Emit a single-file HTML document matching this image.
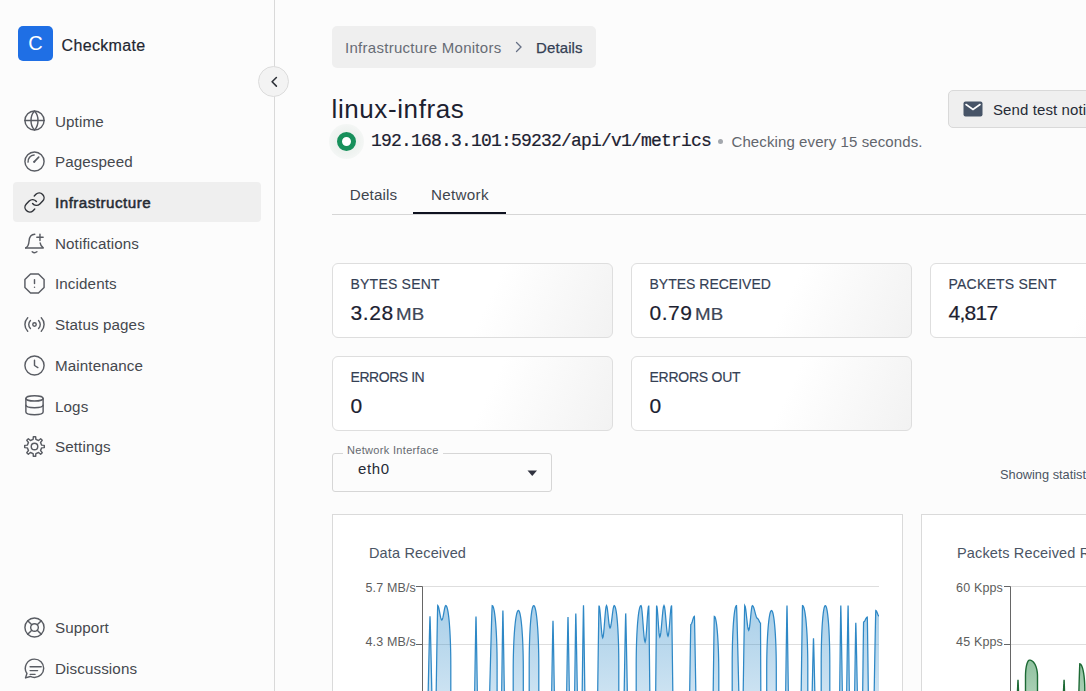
<!DOCTYPE html>
<html><head><meta charset="utf-8">
<style>
*{margin:0;padding:0;box-sizing:border-box}
html,body{width:1086px;height:691px;overflow:hidden;background:#fcfcfc;font-family:"Liberation Sans",sans-serif;color:#344054}
.a{position:absolute;white-space:nowrap;line-height:1}
#sb{position:absolute;left:0;top:0;width:275px;height:691px;border-right:1px solid #d9d9d9;background:#fcfcfc}
.logo{position:absolute;left:18px;top:26px;width:35px;height:35px;border-radius:5px;background:#1f6fe5;color:#fff;font-size:20px;text-align:center;line-height:35px}
.brand{left:61.5px;top:37.8px;font-size:16px;color:#222630;letter-spacing:0.35px;-webkit-text-stroke:0.2px #222630}
.toggle{position:absolute;left:258px;top:66px;width:31px;height:31px;border-radius:50%;background:#f3f3f3;border:1px solid #dcdcdc}
.nav{left:55px;font-size:15.2px;color:#45484e;letter-spacing:0.1px}
.ico{position:absolute;width:23px;height:23px}
.ico svg{display:block;width:23px;height:23px;fill:none;stroke:#595c63;stroke-width:1.5;stroke-linecap:round;stroke-linejoin:round}
.active{position:absolute;left:13px;top:182px;width:248px;height:40px;border-radius:4px;background:#efefef}
.crumb{position:absolute;left:332px;top:26px;width:264px;height:42px;border-radius:5px;background:#efefef}
.card{position:absolute;width:281px;height:75px;border:1px solid #dedede;border-radius:6px;background:linear-gradient(115deg,#ffffff 55%,#f2f2f2 100%)}
.ct{position:absolute;left:17.5px;top:13px;font-size:14px;color:#344054;line-height:1;letter-spacing:0.22px;-webkit-text-stroke:0.15px #344054}
.cv{position:absolute;left:17.5px;top:38px;font-size:21px;letter-spacing:0.6px;color:#1c2130;line-height:1;-webkit-text-stroke:0.2px #1c2130}
.cv small{display:inline-block;font-size:16px;color:#3d4657;margin-left:2.5px;letter-spacing:0.2px;transform:scaleX(1.17);transform-origin:0 0;-webkit-text-stroke:0.2px #3d4657}
.chart{position:absolute;top:514px;height:200px;border:1px solid #dadada;background:#fff}
.yl{font-size:12.5px;color:#5d5d5d;text-align:right;letter-spacing:0.15px}
</style></head><body>
<div id="sb">
  <div class="logo">C</div>
  <div class="a brand">Checkmate</div>
  <div class="active"></div>
  <div class="ico" style="left:23.2px;top:109.2px;"><svg viewBox="0 0 24 24"><circle cx="12" cy="12" r="10"/><path d="M2 12h20"/><path d="M12 2a14 14 0 0 1 3.6 10 14 14 0 0 1-3.6 10 14 14 0 0 1-3.6-10A14 14 0 0 1 12 2z"/></svg></div>
  <div class="a nav" style="top:113.8px;">Uptime</div>
  <div class="ico" style="left:23.2px;top:149.9px;"><svg viewBox="0 0 24 24"><circle cx="12" cy="12" r="10"/><path d="M5.3 12.6A6.8 6.8 0 0 1 11.6 5.2"/><path d="M11.6 12.4L16.4 7.4" stroke-width="1.7"/><circle cx="11.8" cy="12.2" r="1.1" fill="#555a63" stroke="none"/></svg></div>
  <div class="a nav" style="top:154.1px;">Pagespeed</div>
  <div class="ico" style="left:23.2px;top:190.8px;"><svg viewBox="0 0 24 24"><g style="stroke:#2e3137"><path d="M10 13a5 5 0 0 0 7.54.54l3-3a5 5 0 0 0-7.07-7.07l-1.72 1.71"/><path d="M14 11a5 5 0 0 0-7.54-.54l-3 3a5 5 0 0 0 7.07 7.07l1.71-1.71"/></g></svg></div>
  <div class="a nav" style="top:195.1px;color:#262b34;-webkit-text-stroke:0.5px #262b34;letter-spacing:0.48px;">Infrastructure</div>
  <div class="ico" style="left:23.2px;top:231.7px;"><svg viewBox="0 0 24 24"><path d="M2.8 16.6C4.8 15.6 6 13.2 6.3 9.6 6.6 5.2 8.6 2.5 12.3 2.4"/><path d="M17.9 11.4C18.3 14 19.4 15.6 21.2 16.6H2.8"/><path d="M17.7 2.2V8.8M14.4 5.5H21"/><path d="M9.6 20.6C11 21.8 13 21.8 14.5 20.6"/></svg></div>
  <div class="a nav" style="top:235.5px;">Notifications</div>
  <div class="ico" style="left:23.2px;top:272.0px;"><svg viewBox="0 0 24 24"><polygon points="7.86 2 16.14 2 22 7.86 22 16.14 16.14 22 7.86 22 2 16.14 2 7.86 7.86 2"/><path d="M12 8v4"/><path d="M12 16h.01"/></svg></div>
  <div class="a nav" style="top:275.7px;">Incidents</div>
  <div class="ico" style="left:23.2px;top:313.0px;"><svg viewBox="0 0 24 24"><circle cx="12" cy="12" r="1.8"/><path d="M16.24 7.76a6 6 0 0 1 0 8.49m-8.48-.01a6 6 0 0 1 0-8.49m11.31-2.82a10 10 0 0 1 0 14.14m-14.14 0a10 10 0 0 1 0-14.14"/></svg></div>
  <div class="a nav" style="top:317.0px;">Status pages</div>
  <div class="ico" style="left:23.2px;top:353.6px;"><svg viewBox="0 0 24 24"><circle cx="12" cy="12" r="10"/><path d="M12 6.5v5.5l3.5 2.2"/></svg></div>
  <div class="a nav" style="top:357.9px;">Maintenance</div>
  <div class="ico" style="left:23.2px;top:393.8px;"><svg viewBox="0 0 24 24"><ellipse cx="12" cy="4.6" rx="9" ry="2.8"/><path d="M21 11.6c0 1.6-4 2.8-9 2.8s-9-1.2-9-2.8"/><path d="M3 4.6v14.2c0 1.6 4 2.8 9 2.8s9-1.2 9-2.8V4.6"/></svg></div>
  <div class="a nav" style="top:398.5px;">Logs</div>
  <div class="ico" style="left:23.2px;top:435.0px;"><svg viewBox="0 0 24 24"><circle cx="12" cy="12" r="3.4"/><path d="M10.55 4.54 L10.83 1.77 L13.17 1.77 L13.45 4.54 L16.25 5.70 L18.41 3.94 L20.06 5.59 L18.30 7.75 L19.46 10.55 L22.23 10.83 L22.23 13.17 L19.46 13.45 L18.30 16.25 L20.06 18.41 L18.41 20.06 L16.25 18.30 L13.45 19.46 L13.17 22.23 L10.83 22.23 L10.55 19.46 L7.75 18.30 L5.59 20.06 L3.94 18.41 L5.70 16.25 L4.54 13.45 L1.77 13.17 L1.77 10.83 L4.54 10.55 L5.70 7.75 L3.94 5.59 L5.59 3.94 L7.75 5.70Z"/></svg></div>
  <div class="a nav" style="top:438.6px;">Settings</div>
  <div class="ico" style="left:23.2px;top:616.4px;"><svg viewBox="0 0 24 24"><circle cx="12" cy="12" r="10"/><circle cx="12" cy="12" r="4"/><path d="M4.93 4.93l4.24 4.24M14.83 14.83l4.24 4.24M14.83 9.17l4.24-4.24M4.93 19.07l4.24-4.24"/></svg></div>
  <div class="a nav" style="top:619.9px;">Support</div>
  <div class="ico" style="left:23.2px;top:657.1px;"><svg viewBox="0 0 24 24"><path d="M12 2.2a9.6 9.6 0 0 1 0 19.2c-1.6 0-3.1-.4-4.4-1.1L2.6 21.8l1.5-4.6A9.6 9.6 0 0 1 12 2.2z"/><path d="M7.4 10.2H19M7.4 14.2H15.2M7.4 18.1H12.6"/></svg></div>
  <div class="a nav" style="top:660.9px;">Discussions</div>
</div>
<div class="toggle"><svg width="31" height="31" viewBox="0 0 31 31" style="position:absolute;left:-1px;top:-1px"><path d="M18.4 11.5 L14.1 15.8 L18.4 20.1" fill="none" stroke="#2f333a" stroke-width="1.6" stroke-linecap="round" stroke-linejoin="round"/></svg></div>

<div class="crumb"></div>
<div class="a" style="left:345px;top:39.5px;font-size:15px;letter-spacing:0.28px;color:#676c75">Infrastructure Monitors</div>
<svg class="a" style="left:513px;top:41px" width="12" height="12" viewBox="0 0 12 12"><path d="M3.5 1.5 L8 6 L3.5 10.5" fill="none" stroke="#667085" stroke-width="1.3" stroke-linecap="round"/></svg>
<div class="a" style="left:536px;top:39.5px;font-size:15px;letter-spacing:0.12px;color:#344054;-webkit-text-stroke:0.25px #344054">Details</div>

<div class="a" style="left:331.5px;top:96px;font-size:26px;letter-spacing:0.6px;color:#1c2130">linux-infras</div>
<div class="a" style="left:329px;top:124px;width:35px;height:35px;border-radius:50%;background:radial-gradient(circle,rgba(225,235,228,0.9) 0%,rgba(235,240,237,0.7) 55%,rgba(252,252,252,0) 100%)"></div>
<div class="a" style="left:337px;top:132px;width:19px;height:19px;border-radius:50%;border:5.3px solid #17905b;background:#fff"></div>
<div class="a" style="left:371px;top:132px;font-family:'Liberation Mono',monospace;font-size:18px;letter-spacing:-0.8px;color:#1c2130;-webkit-text-stroke:0.2px #1c2130">192.168.3.101:59232/api/v1/metrics</div>
<div class="a" style="left:717.5px;top:139px;width:5px;height:5px;border-radius:50%;background:#a3a7ad"></div>
<div class="a" style="left:731.5px;top:134px;font-size:15px;letter-spacing:0.1px;color:#62666d">Checking every 15 seconds.</div>

<div class="a" style="left:948px;top:90px;width:160px;height:38px;border:1px solid #d9d9d9;border-radius:5px;background:#efefef"></div>
<svg class="a" style="left:963px;top:101px" width="20" height="16" viewBox="0 0 20 16"><rect x="0.5" y="0.5" width="19" height="15" rx="2" fill="#475467"/><path d="M3 3.5 L10 8.5 L17 3.5" fill="none" stroke="#fff" stroke-width="1.6" stroke-linecap="round"/></svg>
<div class="a" style="left:993px;top:101.5px;font-size:15px;letter-spacing:0.1px;color:#262b36">Send test notification</div>

<div class="a" style="left:349.8px;top:186.8px;font-size:15.2px;letter-spacing:0.15px;color:#40454e">Details</div>
<div class="a" style="left:431px;top:186.8px;font-size:15.2px;letter-spacing:0.3px;color:#40454e">Network</div>
<div class="a" style="left:332px;top:214px;width:760px;height:1px;background:#d6d6d6"></div>
<div class="a" style="left:413px;top:212px;width:93px;height:2px;background:#0f1220"></div>

<div class="card" style="left:332px;top:263px"><div class="ct">BYTES SENT</div><div class="cv">3.28<small>MB</small></div></div>
<div class="card" style="left:631px;top:263px"><div class="ct" style="letter-spacing:0px">BYTES RECEIVED</div><div class="cv" style="letter-spacing:0.5px">0.79<small>MB</small></div></div>
<div class="card" style="left:930px;top:263px"><div class="ct">PACKETS SENT</div><div class="cv" style="letter-spacing:-0.7px">4,817</div></div>
<div class="card" style="left:332px;top:356px"><div class="ct" style="letter-spacing:-0.45px">ERRORS IN</div><div class="cv">0</div></div>
<div class="card" style="left:631px;top:356px"><div class="ct" style="letter-spacing:-0.25px">ERRORS OUT</div><div class="cv">0</div></div>

<div class="a" style="left:332px;top:453px;width:220px;height:39px;border:1px solid #d6d6d6;border-radius:3px"></div>
<div class="a" style="left:343px;top:444px;height:14px;padding:0 4px;background:#fcfcfc;font-size:11px;letter-spacing:0.32px;color:#666a70;line-height:13px">Network Interface</div>
<div class="a" style="left:358px;top:461px;font-size:15px;letter-spacing:0.6px;color:#262b36">eth0</div>
<svg class="a" style="left:527px;top:469.5px" width="11" height="7" viewBox="0 0 11 7"><path d="M0.5 0.5 L10 0.5 L5.25 6 Z" fill="#30323f"/></svg>
<div class="a" style="left:1000px;top:469px;font-size:12.8px;color:#4b5563">Showing statistics for last 1 hour</div>

<div class="chart" style="left:332px;width:571px"></div>
<div class="chart" style="left:921px;width:300px"></div>
<div class="a" style="left:369px;top:546px;font-size:14.5px;letter-spacing:0.15px;color:#4b5565">Data Received</div>
<div class="a" style="left:957px;top:546px;font-size:14.5px;letter-spacing:0.15px;color:#4b5565">Packets Received Rate</div>
<div class="a yl" style="left:340px;width:76px;top:582px">5.7 MB/s</div>
<div class="a yl" style="left:340px;width:76px;top:636px">4.3 MB/s</div>
<div class="a yl" style="left:930px;width:73px;top:582px">60 Kpps</div>
<div class="a yl" style="left:930px;width:73px;top:636px">45 Kpps</div>
<svg class="a" style="left:0;top:0" width="1086" height="691" viewBox="0 0 1086 691">
<defs>
<linearGradient id="gb" x1="0" y1="600" x2="0" y2="760" gradientUnits="userSpaceOnUse"><stop offset="0" stop-color="#2f8bc9" stop-opacity="0.42"/><stop offset="1" stop-color="#2f8bc9" stop-opacity="0.12"/></linearGradient>
<linearGradient id="gg" x1="0" y1="655" x2="0" y2="760" gradientUnits="userSpaceOnUse"><stop offset="0" stop-color="#2e8b4a" stop-opacity="0.55"/><stop offset="1" stop-color="#2e8b4a" stop-opacity="0.15"/></linearGradient>
<clipPath id="cb"><rect x="422" y="580" width="457" height="120"/></clipPath>
<clipPath id="cg"><rect x="1010" y="580" width="200" height="120"/></clipPath>
</defs>
<path d="M422 586.5 H879 M422 644.5 H879" stroke="#dedede" stroke-width="1"/>
<path d="M416 586.5 H422.5 V700 M416 644.5 H422.5" fill="none" stroke="#666" stroke-width="1"/>
<path d="M1010 586.5 H1086 M1010 644.5 H1086" stroke="#dedede" stroke-width="1"/>
<path d="M1004 586.5 H1010.5 V700 M1004 644.5 H1010.5" fill="none" stroke="#666" stroke-width="1"/>
<g clip-path="url(#cb)"><path d="M428.20 702.00 L428.20 691.00 L428.27 687.89 L428.33 684.78 L428.40 681.67 L428.46 678.57 L428.53 675.46 L428.60 672.35 L428.67 669.24 L428.73 666.13 L428.80 663.02 L428.87 659.92 L428.94 656.81 L429.01 653.70 L429.08 650.59 L429.15 647.48 L429.22 644.38 L429.29 641.27 L429.36 638.16 L429.44 635.05 L429.51 631.94 L429.59 628.83 L429.67 625.73 L429.76 622.62 L429.85 619.51 L430.00 616.40 L430.15 619.51 L430.24 622.62 L430.33 625.73 L430.41 628.83 L430.49 631.94 L430.56 635.05 L430.64 638.16 L430.71 641.27 L430.78 644.38 L430.85 647.48 L430.92 650.59 L430.99 653.70 L431.06 656.81 L431.13 659.92 L431.20 663.02 L431.27 666.13 L431.33 669.24 L431.40 672.35 L431.47 675.46 L431.54 678.57 L431.60 681.67 L431.67 684.78 L431.73 687.89 L431.80 691.00 L431.80 702.00Z M436.20 702.00 L436.20 691.00 L436.25 687.44 L436.31 683.88 L436.36 680.33 L436.42 676.77 L436.48 673.21 L436.53 669.65 L436.59 666.09 L436.64 662.53 L436.70 658.98 L436.76 655.42 L436.81 651.86 L436.87 648.30 L436.93 644.74 L436.99 641.18 L437.05 637.62 L437.11 634.07 L437.17 630.51 L437.23 626.95 L437.29 623.39 L437.36 619.83 L437.43 616.27 L437.50 612.72 L437.58 609.16 L437.70 605.60 L438.21 606.15 L438.73 607.71 L439.24 610.04 L439.75 612.80 L440.26 615.56 L440.77 617.89 L441.29 619.45 L441.80 620.00 L442.30 619.45 L442.80 617.89 L443.30 615.56 L443.80 612.80 L444.30 610.04 L444.80 607.71 L445.30 606.15 L445.80 605.60 L446.15 605.75 L446.50 606.19 L446.85 606.93 L447.19 607.97 L447.53 609.31 L447.86 610.94 L448.18 612.86 L448.50 615.09 L448.80 617.61 L449.09 620.43 L449.37 623.54 L449.62 626.95 L449.86 630.66 L450.08 634.66 L450.28 638.96 L450.45 643.56 L450.59 648.45 L450.70 653.64 L450.77 659.12 L450.80 664.91 L450.80 670.98 L450.80 677.36 L450.80 684.03 L450.80 691.00 L450.80 702.00Z M474.70 702.00 L474.70 691.00 L474.75 687.89 L474.80 684.78 L474.84 681.67 L474.89 678.57 L474.94 675.46 L474.99 672.35 L475.04 669.24 L475.08 666.13 L475.13 663.02 L475.18 659.92 L475.23 656.81 L475.28 653.70 L475.33 650.59 L475.38 647.48 L475.44 644.38 L475.49 641.27 L475.54 638.16 L475.59 635.05 L475.65 631.94 L475.70 628.83 L475.76 625.73 L475.82 622.62 L475.89 619.51 L476.00 616.40 L476.11 619.51 L476.18 622.62 L476.24 625.73 L476.30 628.83 L476.35 631.94 L476.41 635.05 L476.46 638.16 L476.51 641.27 L476.56 644.38 L476.62 647.48 L476.67 650.59 L476.72 653.70 L476.77 656.81 L476.82 659.92 L476.87 663.02 L476.92 666.13 L476.96 669.24 L477.01 672.35 L477.06 675.46 L477.11 678.57 L477.16 681.67 L477.20 684.78 L477.25 687.89 L477.30 691.00 L477.30 702.00Z M489.70 702.00 L489.70 691.00 L489.79 687.44 L489.88 683.88 L489.97 680.33 L490.07 676.77 L490.16 673.21 L490.25 669.65 L490.35 666.09 L490.44 662.53 L490.53 658.98 L490.63 655.42 L490.72 651.86 L490.82 648.30 L490.92 644.74 L491.02 641.18 L491.11 637.62 L491.21 634.07 L491.32 630.51 L491.42 626.95 L491.52 623.39 L491.63 619.83 L491.74 616.27 L491.86 612.72 L491.99 609.16 L492.20 605.60 L492.55 605.75 L492.89 606.19 L493.23 606.93 L493.57 607.97 L493.90 609.31 L494.23 610.94 L494.54 612.86 L494.85 615.09 L495.15 617.61 L495.43 620.43 L495.70 623.54 L495.96 626.95 L496.19 630.66 L496.41 634.66 L496.60 638.96 L496.76 643.56 L496.90 648.45 L497.01 653.64 L497.07 659.12 L497.10 664.91 L497.10 670.98 L497.10 677.36 L497.10 684.03 L497.10 691.00 L497.10 702.00Z M501.70 702.00 L501.70 691.00 L501.74 687.65 L501.79 684.29 L501.83 680.94 L501.88 677.58 L501.92 674.23 L501.97 670.88 L502.01 667.52 L502.06 664.17 L502.10 660.81 L502.15 657.46 L502.19 654.10 L502.24 650.75 L502.28 647.40 L502.33 644.04 L502.38 640.69 L502.43 637.33 L502.48 633.98 L502.52 630.62 L502.58 627.27 L502.63 623.92 L502.68 620.56 L502.74 617.21 L502.80 613.85 L502.90 610.50 L503.02 613.85 L503.09 617.21 L503.15 620.56 L503.22 623.92 L503.28 627.27 L503.34 630.62 L503.40 633.98 L503.45 637.33 L503.51 640.69 L503.56 644.04 L503.62 647.40 L503.67 650.75 L503.73 654.10 L503.78 657.46 L503.83 660.81 L503.89 664.17 L503.94 667.52 L503.99 670.88 L504.04 674.23 L504.09 677.58 L504.15 680.94 L504.20 684.29 L504.25 687.65 L504.30 691.00 L504.30 702.00Z M513.20 702.00 L513.20 691.00 L513.20 684.43 L513.20 678.14 L513.20 672.13 L513.22 666.40 L513.27 660.95 L513.37 655.78 L513.50 650.89 L513.66 646.28 L513.84 641.95 L514.05 637.89 L514.28 634.12 L514.53 630.62 L514.80 627.41 L515.08 624.48 L515.37 621.82 L515.68 619.44 L516.00 617.35 L516.33 615.53 L516.66 613.99 L517.00 612.74 L517.35 611.76 L517.70 611.06 L518.05 610.64 L518.40 610.50 L518.74 610.64 L519.07 611.06 L519.40 611.76 L519.73 612.74 L520.05 613.99 L520.37 615.53 L520.68 617.35 L520.98 619.44 L521.27 621.82 L521.55 624.48 L521.82 627.41 L522.07 630.62 L522.30 634.12 L522.52 637.89 L522.72 641.95 L522.89 646.28 L523.04 650.89 L523.15 655.78 L523.24 660.95 L523.29 666.40 L523.30 672.13 L523.30 678.14 L523.30 684.43 L523.30 691.00 L523.30 702.00Z M529.20 702.00 L529.20 691.00 L529.20 684.03 L529.20 677.36 L529.20 670.98 L529.20 664.91 L529.22 659.12 L529.27 653.64 L529.36 648.45 L529.49 643.56 L529.64 638.96 L529.81 634.66 L530.01 630.66 L530.22 626.95 L530.46 623.54 L530.71 620.43 L530.97 617.61 L531.24 615.09 L531.53 612.86 L531.82 610.94 L532.12 609.31 L532.43 607.97 L532.74 606.93 L533.06 606.19 L533.38 605.75 L533.70 605.60 L534.06 605.75 L534.41 606.19 L534.77 606.93 L535.12 607.97 L535.46 609.31 L535.80 610.94 L536.13 612.86 L536.45 615.09 L536.75 617.61 L537.05 620.43 L537.33 623.54 L537.59 626.95 L537.84 630.66 L538.06 634.66 L538.26 638.96 L538.44 643.56 L538.58 648.45 L538.69 653.64 L538.77 659.12 L538.80 664.91 L538.80 670.98 L538.80 677.36 L538.80 684.03 L538.80 691.00 L538.80 702.00Z M551.70 702.00 L551.70 691.00 L551.75 688.08 L551.80 685.15 L551.84 682.23 L551.89 679.30 L551.94 676.38 L551.99 673.45 L552.04 670.52 L552.08 667.60 L552.13 664.67 L552.18 661.75 L552.23 658.82 L552.28 655.90 L552.33 652.98 L552.38 650.05 L552.44 647.12 L552.49 644.20 L552.54 641.27 L552.59 638.35 L552.65 635.42 L552.70 632.50 L552.76 629.57 L552.82 626.65 L552.89 623.72 L553.00 620.80 L553.11 623.72 L553.18 626.65 L553.24 629.57 L553.30 632.50 L553.35 635.42 L553.41 638.35 L553.46 641.27 L553.51 644.20 L553.56 647.12 L553.62 650.05 L553.67 652.98 L553.72 655.90 L553.77 658.82 L553.82 661.75 L553.87 664.67 L553.92 667.60 L553.96 670.52 L554.01 673.45 L554.06 676.38 L554.11 679.30 L554.16 682.23 L554.20 685.15 L554.25 688.08 L554.30 691.00 L554.30 702.00Z M566.70 702.00 L566.70 691.00 L566.75 687.92 L566.80 684.84 L566.84 681.76 L566.89 678.68 L566.94 675.60 L566.99 672.52 L567.04 669.45 L567.08 666.37 L567.13 663.29 L567.18 660.21 L567.23 657.13 L567.28 654.05 L567.33 650.97 L567.38 647.89 L567.44 644.81 L567.49 641.73 L567.54 638.65 L567.59 635.58 L567.65 632.50 L567.70 629.42 L567.76 626.34 L567.82 623.26 L567.89 620.18 L568.00 617.10 L568.11 620.18 L568.18 623.26 L568.24 626.34 L568.30 629.42 L568.35 632.50 L568.41 635.58 L568.46 638.65 L568.51 641.73 L568.56 644.81 L568.62 647.89 L568.67 650.97 L568.72 654.05 L568.77 657.13 L568.82 660.21 L568.87 663.29 L568.92 666.37 L568.96 669.45 L569.01 672.52 L569.06 675.60 L569.11 678.68 L569.16 681.76 L569.20 684.84 L569.25 687.92 L569.30 691.00 L569.30 702.00Z M574.70 702.00 L574.70 691.00 L574.74 687.77 L574.78 684.53 L574.82 681.30 L574.86 678.07 L574.90 674.83 L574.94 671.60 L574.98 668.37 L575.03 665.13 L575.07 661.90 L575.11 658.67 L575.15 655.43 L575.19 652.20 L575.24 648.97 L575.28 645.73 L575.32 642.50 L575.37 639.27 L575.41 636.03 L575.46 632.80 L575.50 629.57 L575.55 626.33 L575.60 623.10 L575.65 619.87 L575.71 616.63 L575.80 613.40 L575.92 616.63 L576.00 619.87 L576.07 623.10 L576.14 626.33 L576.21 629.57 L576.27 632.80 L576.33 636.03 L576.39 639.27 L576.45 642.50 L576.51 645.73 L576.57 648.97 L576.63 652.20 L576.69 655.43 L576.74 658.67 L576.80 661.90 L576.86 665.13 L576.91 668.37 L576.97 671.60 L577.02 674.83 L577.08 678.07 L577.14 681.30 L577.19 684.53 L577.25 687.77 L577.30 691.00 L577.30 702.00Z M582.20 702.00 L582.20 691.00 L582.25 687.43 L582.30 683.86 L582.34 680.29 L582.39 676.72 L582.44 673.15 L582.49 669.58 L582.54 666.00 L582.58 662.43 L582.63 658.86 L582.68 655.29 L582.73 651.72 L582.78 648.15 L582.83 644.58 L582.88 641.01 L582.94 637.44 L582.99 633.87 L583.04 630.30 L583.09 626.72 L583.15 623.15 L583.20 619.58 L583.26 616.01 L583.32 612.44 L583.39 608.87 L583.50 605.30 L583.61 608.87 L583.68 612.44 L583.74 616.01 L583.80 619.58 L583.85 623.15 L583.91 626.72 L583.96 630.30 L584.01 633.87 L584.06 637.44 L584.12 641.01 L584.17 644.58 L584.22 648.15 L584.27 651.72 L584.32 655.29 L584.37 658.86 L584.42 662.43 L584.46 666.00 L584.51 669.58 L584.56 673.15 L584.61 676.72 L584.66 680.29 L584.70 683.86 L584.75 687.43 L584.80 691.00 L584.80 702.00Z M597.70 702.00 L597.70 691.00 L597.75 687.44 L597.80 683.88 L597.84 680.33 L597.89 676.77 L597.94 673.21 L597.99 669.65 L598.04 666.09 L598.08 662.53 L598.13 658.98 L598.18 655.42 L598.23 651.86 L598.28 648.30 L598.33 644.74 L598.38 641.18 L598.44 637.62 L598.49 634.07 L598.54 630.51 L598.59 626.95 L598.65 623.39 L598.70 619.83 L598.76 616.27 L598.82 612.72 L598.89 609.16 L599.00 605.60 L599.46 606.82 L599.92 610.30 L600.39 615.51 L600.85 621.65 L601.31 627.79 L601.78 633.00 L602.24 636.48 L602.70 637.70 L603.18 636.48 L603.65 633.00 L604.12 627.79 L604.60 621.65 L605.08 615.51 L605.55 610.30 L606.02 606.82 L606.50 605.60 L606.94 606.45 L607.38 608.88 L607.81 612.51 L608.25 616.80 L608.69 621.09 L609.12 624.72 L609.56 627.15 L610.00 628.00 L610.52 627.15 L611.05 624.72 L611.58 621.09 L612.10 616.80 L612.62 612.51 L613.15 608.88 L613.68 606.45 L614.20 605.60 L614.53 605.75 L614.85 606.19 L615.17 606.93 L615.49 607.97 L615.81 609.31 L616.11 610.94 L616.41 612.86 L616.71 615.09 L616.99 617.61 L617.25 620.43 L617.51 623.54 L617.75 626.95 L617.97 630.66 L618.17 634.66 L618.35 638.96 L618.50 643.56 L618.63 648.45 L618.72 653.64 L618.78 659.12 L618.80 664.91 L618.80 670.98 L618.80 677.36 L618.80 684.03 L618.80 691.00 L618.80 702.00Z M624.20 702.00 L624.20 691.00 L624.25 687.77 L624.31 684.53 L624.36 681.30 L624.42 678.07 L624.48 674.83 L624.53 671.60 L624.59 668.37 L624.64 665.13 L624.70 661.90 L624.76 658.67 L624.81 655.43 L624.87 652.20 L624.93 648.97 L624.99 645.73 L625.05 642.50 L625.11 639.27 L625.17 636.03 L625.23 632.80 L625.29 629.57 L625.36 626.33 L625.43 623.10 L625.50 619.87 L625.58 616.63 L625.70 613.40 L625.83 616.63 L625.92 619.87 L625.99 623.10 L626.06 626.33 L626.13 629.57 L626.20 632.80 L626.27 636.03 L626.33 639.27 L626.39 642.50 L626.46 645.73 L626.52 648.97 L626.58 652.20 L626.64 655.43 L626.71 658.67 L626.77 661.90 L626.83 665.13 L626.89 668.37 L626.95 671.60 L627.01 674.83 L627.07 678.07 L627.12 681.30 L627.18 684.53 L627.24 687.77 L627.30 691.00 L627.30 702.00Z M636.20 702.00 L636.20 691.00 L636.20 684.03 L636.20 677.36 L636.20 670.98 L636.20 664.91 L636.22 659.12 L636.29 653.64 L636.39 648.45 L636.52 643.56 L636.69 638.96 L636.87 634.66 L637.08 630.66 L637.31 626.95 L637.56 623.54 L637.83 620.43 L638.11 617.61 L638.40 615.09 L638.70 612.86 L639.01 610.94 L639.33 609.31 L639.66 607.97 L639.99 606.93 L640.32 606.19 L640.66 605.75 L641.00 605.60 L641.51 606.99 L642.02 610.95 L642.54 616.87 L643.05 623.85 L643.56 630.83 L644.08 636.75 L644.59 640.71 L645.10 642.10 L645.56 640.71 L646.02 636.75 L646.49 630.83 L646.95 623.85 L647.41 616.87 L647.88 610.95 L648.34 606.99 L648.80 605.60 L648.88 609.16 L648.93 612.72 L648.98 616.27 L649.03 619.83 L649.07 623.39 L649.11 626.95 L649.15 630.51 L649.19 634.07 L649.23 637.62 L649.27 641.18 L649.31 644.74 L649.35 648.30 L649.39 651.86 L649.43 655.42 L649.47 658.98 L649.50 662.53 L649.54 666.09 L649.58 669.65 L649.62 673.21 L649.65 676.77 L649.69 680.33 L649.73 683.88 L649.76 687.44 L649.80 691.00 L649.80 702.00Z M655.70 702.00 L655.70 691.00 L655.73 687.44 L655.77 683.88 L655.80 680.33 L655.83 676.77 L655.87 673.21 L655.90 669.65 L655.93 666.09 L655.97 662.53 L656.00 658.98 L656.03 655.42 L656.07 651.86 L656.10 648.30 L656.14 644.74 L656.17 641.18 L656.21 637.62 L656.25 634.07 L656.28 630.51 L656.32 626.95 L656.36 623.39 L656.40 619.83 L656.44 616.27 L656.48 612.72 L656.53 609.16 L656.60 605.60 L657.00 606.80 L657.40 610.20 L657.80 615.29 L658.20 621.30 L658.60 627.31 L659.00 632.40 L659.40 635.80 L659.80 637.00 L660.32 635.80 L660.85 632.40 L661.38 627.31 L661.90 621.30 L662.42 615.29 L662.95 610.20 L663.48 606.80 L664.00 605.60 L664.50 606.76 L665.00 610.08 L665.50 615.04 L666.00 620.90 L666.50 626.76 L667.00 631.72 L667.50 635.04 L668.00 636.20 L668.45 635.04 L668.90 631.72 L669.35 626.76 L669.80 620.90 L670.25 615.04 L670.70 610.08 L671.15 606.76 L671.60 605.60 L671.70 609.16 L671.76 612.72 L671.82 616.27 L671.87 619.83 L671.92 623.39 L671.98 626.95 L672.02 630.51 L672.07 634.07 L672.12 637.62 L672.17 641.18 L672.22 644.74 L672.26 648.30 L672.31 651.86 L672.35 655.42 L672.40 658.98 L672.44 662.53 L672.49 666.09 L672.53 669.65 L672.58 673.21 L672.62 676.77 L672.67 680.33 L672.71 683.88 L672.76 687.44 L672.80 691.00 L672.80 702.00Z M689.70 702.00 L689.70 691.00 L689.74 688.23 L689.78 685.46 L689.82 682.69 L689.86 679.92 L689.90 677.15 L689.94 674.38 L689.98 671.60 L690.03 668.83 L690.07 666.06 L690.11 663.29 L690.15 660.52 L690.19 657.75 L690.24 654.98 L690.28 652.21 L690.32 649.44 L690.37 646.67 L690.41 643.90 L690.46 641.12 L690.50 638.35 L690.55 635.58 L690.60 632.81 L690.65 630.04 L690.71 627.27 L690.80 624.50 L691.25 624.19 L691.70 623.31 L692.15 622.00 L692.60 620.45 L693.05 618.90 L693.50 617.59 L693.95 616.71 L694.40 616.40 L694.52 619.51 L694.59 622.62 L694.65 625.73 L694.72 628.83 L694.78 631.94 L694.84 635.05 L694.90 638.16 L694.95 641.27 L695.01 644.38 L695.06 647.48 L695.12 650.59 L695.17 653.70 L695.23 656.81 L695.28 659.92 L695.33 663.02 L695.39 666.13 L695.44 669.24 L695.49 672.35 L695.54 675.46 L695.59 678.57 L695.65 681.67 L695.70 684.78 L695.75 687.89 L695.80 691.00 L695.80 702.00Z M713.20 702.00 L713.20 691.00 L713.24 687.89 L713.28 684.78 L713.32 681.67 L713.36 678.57 L713.40 675.46 L713.44 672.35 L713.48 669.24 L713.53 666.13 L713.57 663.02 L713.61 659.92 L713.65 656.81 L713.69 653.70 L713.74 650.59 L713.78 647.48 L713.82 644.38 L713.87 641.27 L713.91 638.16 L713.96 635.05 L714.00 631.94 L714.05 628.83 L714.10 625.73 L714.15 622.62 L714.21 619.51 L714.30 616.40 L714.60 616.53 L714.90 616.92 L715.19 617.57 L715.49 618.47 L715.78 619.64 L716.06 621.06 L716.34 622.75 L716.61 624.69 L716.87 626.89 L717.12 629.35 L717.37 632.07 L717.59 635.05 L717.81 638.29 L718.01 641.78 L718.19 645.54 L718.36 649.56 L718.50 653.83 L718.62 658.36 L718.71 663.15 L718.77 668.21 L718.80 673.52 L718.80 679.08 L718.80 684.91 L718.80 691.00 L718.80 702.00Z M732.20 702.00 L732.20 691.00 L732.20 684.03 L732.20 677.36 L732.20 670.98 L732.20 664.91 L732.21 659.12 L732.26 653.64 L732.35 648.45 L732.46 643.56 L732.61 638.96 L732.77 634.66 L732.96 630.66 L733.17 626.95 L733.39 623.54 L733.63 620.43 L733.88 617.61 L734.14 615.09 L734.41 612.86 L734.70 610.94 L734.99 609.31 L735.28 607.97 L735.58 606.93 L735.89 606.19 L736.19 605.75 L736.50 605.60 L736.69 609.16 L736.81 612.72 L736.92 616.27 L737.02 619.83 L737.12 623.39 L737.22 626.95 L737.31 630.51 L737.41 634.07 L737.50 637.62 L737.59 641.18 L737.68 644.74 L737.77 648.30 L737.86 651.86 L737.95 655.42 L738.03 658.98 L738.12 662.53 L738.21 666.09 L738.29 669.65 L738.38 673.21 L738.46 676.77 L738.55 680.33 L738.63 683.88 L738.72 687.44 L738.80 691.00 L738.80 702.00Z M743.20 702.00 L743.20 691.00 L743.25 687.44 L743.31 683.88 L743.36 680.33 L743.42 676.77 L743.48 673.21 L743.53 669.65 L743.59 666.09 L743.64 662.53 L743.70 658.98 L743.76 655.42 L743.81 651.86 L743.87 648.30 L743.93 644.74 L743.99 641.18 L744.05 637.62 L744.11 634.07 L744.17 630.51 L744.23 626.95 L744.29 623.39 L744.36 619.83 L744.43 616.27 L744.50 612.72 L744.58 609.16 L744.70 605.60 L745.20 606.54 L745.70 609.22 L746.20 613.22 L746.70 617.95 L747.20 622.68 L747.70 626.68 L748.20 629.36 L748.70 630.30 L749.16 629.36 L749.62 626.68 L750.09 622.68 L750.55 617.95 L751.01 613.22 L751.48 609.22 L751.94 606.54 L752.40 605.60 L753.05 606.09 L753.70 607.50 L754.35 609.61 L755.00 612.10 L755.65 614.59 L756.30 616.70 L756.95 618.11 L757.60 618.60 L757.96 618.77 L758.33 619.24 L758.69 619.96 L759.05 620.80 L759.41 621.64 L759.77 622.36 L760.14 622.83 L760.50 623.00 L760.52 625.83 L760.54 628.67 L760.55 631.50 L760.57 634.33 L760.58 637.17 L760.59 640.00 L760.61 642.83 L760.62 645.67 L760.63 648.50 L760.64 651.33 L760.65 654.17 L760.67 657.00 L760.68 659.83 L760.69 662.67 L760.70 665.50 L760.71 668.33 L760.72 671.17 L760.73 674.00 L760.74 676.83 L760.76 679.67 L760.77 682.50 L760.78 685.33 L760.79 688.17 L760.80 691.00 L760.80 702.00Z M766.70 702.00 L766.70 691.00 L766.70 684.43 L766.70 678.14 L766.70 672.13 L766.71 666.40 L766.75 660.95 L766.84 655.78 L766.95 650.89 L767.10 646.28 L767.26 641.95 L767.46 637.89 L767.67 634.12 L767.90 630.62 L768.15 627.41 L768.41 624.48 L768.68 621.82 L768.97 619.44 L769.26 617.35 L769.57 615.53 L769.88 613.99 L770.20 612.74 L770.52 611.76 L770.84 611.06 L771.17 610.64 L771.50 610.50 L771.83 610.64 L772.16 611.06 L772.48 611.76 L772.80 612.74 L773.12 613.99 L773.43 615.53 L773.74 617.35 L774.03 619.44 L774.32 621.82 L774.59 624.48 L774.85 627.41 L775.10 630.62 L775.33 634.12 L775.54 637.89 L775.74 641.95 L775.90 646.28 L776.05 650.89 L776.16 655.78 L776.25 660.95 L776.29 666.40 L776.30 672.13 L776.30 678.14 L776.30 684.43 L776.30 691.00 L776.30 702.00Z M785.70 702.00 L785.70 691.00 L785.75 687.44 L785.80 683.88 L785.84 680.33 L785.89 676.77 L785.94 673.21 L785.99 669.65 L786.04 666.09 L786.08 662.53 L786.13 658.98 L786.18 655.42 L786.23 651.86 L786.28 648.30 L786.33 644.74 L786.38 641.18 L786.44 637.62 L786.49 634.07 L786.54 630.51 L786.59 626.95 L786.65 623.39 L786.70 619.83 L786.76 616.27 L786.82 612.72 L786.89 609.16 L787.00 605.60 L787.11 609.16 L787.18 612.72 L787.24 616.27 L787.30 619.83 L787.35 623.39 L787.41 626.95 L787.46 630.51 L787.51 634.07 L787.56 637.62 L787.62 641.18 L787.67 644.74 L787.72 648.30 L787.77 651.86 L787.82 655.42 L787.87 658.98 L787.92 662.53 L787.96 666.09 L788.01 669.65 L788.06 673.21 L788.11 676.77 L788.16 680.33 L788.20 683.88 L788.25 687.44 L788.30 691.00 L788.30 702.00Z M801.20 702.00 L801.20 691.00 L801.25 687.44 L801.30 683.88 L801.34 680.33 L801.39 676.77 L801.44 673.21 L801.49 669.65 L801.54 666.09 L801.58 662.53 L801.63 658.98 L801.68 655.42 L801.73 651.86 L801.78 648.30 L801.83 644.74 L801.88 641.18 L801.94 637.62 L801.99 634.07 L802.04 630.51 L802.09 626.95 L802.15 623.39 L802.20 619.83 L802.26 616.27 L802.32 612.72 L802.39 609.16 L802.50 605.60 L802.87 605.75 L803.24 606.19 L803.60 606.93 L803.96 607.97 L804.32 609.31 L804.67 610.94 L805.01 612.86 L805.34 615.09 L805.66 617.61 L805.97 620.43 L806.26 623.54 L806.53 626.95 L806.78 630.66 L807.02 634.66 L807.23 638.96 L807.41 643.56 L807.56 648.45 L807.68 653.64 L807.76 659.12 L807.80 664.91 L807.80 670.98 L807.80 677.36 L807.80 684.03 L807.80 691.00 L807.80 702.00Z M812.20 702.00 L812.20 691.00 L812.25 688.81 L812.30 686.62 L812.34 684.42 L812.39 682.23 L812.44 680.04 L812.49 677.85 L812.54 675.66 L812.58 673.47 L812.63 671.27 L812.68 669.08 L812.73 666.89 L812.78 664.70 L812.83 662.51 L812.88 660.32 L812.94 658.12 L812.99 655.93 L813.04 653.74 L813.09 651.55 L813.15 649.36 L813.20 647.17 L813.26 644.98 L813.32 642.78 L813.39 640.59 L813.50 638.40 L813.61 640.59 L813.68 642.78 L813.74 644.98 L813.80 647.17 L813.85 649.36 L813.91 651.55 L813.96 653.74 L814.01 655.93 L814.06 658.12 L814.12 660.32 L814.17 662.51 L814.22 664.70 L814.27 666.89 L814.32 669.08 L814.37 671.27 L814.42 673.47 L814.46 675.66 L814.51 677.85 L814.56 680.04 L814.61 682.23 L814.66 684.42 L814.70 686.62 L814.75 688.81 L814.80 691.00 L814.80 702.00Z M821.20 702.00 L821.20 691.00 L821.20 684.03 L821.20 677.36 L821.20 670.98 L821.20 664.91 L821.21 659.12 L821.25 653.64 L821.33 648.45 L821.44 643.56 L821.58 638.96 L821.73 634.66 L821.91 630.66 L822.11 626.95 L822.32 623.54 L822.55 620.43 L822.79 617.61 L823.04 615.09 L823.30 612.86 L823.57 610.94 L823.85 609.31 L824.13 607.97 L824.42 606.93 L824.71 606.19 L825.01 605.75 L825.30 605.60 L825.62 605.75 L825.94 606.19 L826.26 606.93 L826.57 607.97 L826.88 609.31 L827.18 610.94 L827.47 612.86 L827.76 615.09 L828.03 617.61 L828.29 620.43 L828.54 623.54 L828.78 626.95 L828.99 630.66 L829.19 634.66 L829.36 638.96 L829.51 643.56 L829.64 648.45 L829.73 653.64 L829.78 659.12 L829.80 664.91 L829.80 670.98 L829.80 677.36 L829.80 684.03 L829.80 691.00 L829.80 702.00Z M839.70 702.00 L839.70 691.00 L839.74 687.44 L839.78 683.88 L839.82 680.33 L839.86 676.77 L839.90 673.21 L839.94 669.65 L839.98 666.09 L840.03 662.53 L840.07 658.98 L840.11 655.42 L840.15 651.86 L840.19 648.30 L840.24 644.74 L840.28 641.18 L840.32 637.62 L840.37 634.07 L840.41 630.51 L840.46 626.95 L840.50 623.39 L840.55 619.83 L840.60 616.27 L840.65 612.72 L840.71 609.16 L840.80 605.60 L840.92 609.16 L841.00 612.72 L841.07 616.27 L841.14 619.83 L841.21 623.39 L841.27 626.95 L841.33 630.51 L841.39 634.07 L841.45 637.62 L841.51 641.18 L841.57 644.74 L841.63 648.30 L841.69 651.86 L841.74 655.42 L841.80 658.98 L841.86 662.53 L841.91 666.09 L841.97 669.65 L842.02 673.21 L842.08 676.77 L842.14 680.33 L842.19 683.88 L842.25 687.44 L842.30 691.00 L842.30 702.00Z M846.70 702.00 L846.70 691.00 L846.75 687.44 L846.80 683.88 L846.85 680.33 L846.91 676.77 L846.96 673.21 L847.01 669.65 L847.06 666.09 L847.11 662.53 L847.17 658.98 L847.22 655.42 L847.27 651.86 L847.33 648.30 L847.38 644.74 L847.44 641.18 L847.49 637.62 L847.55 634.07 L847.60 630.51 L847.66 626.95 L847.72 623.39 L847.78 619.83 L847.85 616.27 L847.91 612.72 L847.98 609.16 L848.10 605.60 L848.20 609.16 L848.26 612.72 L848.32 616.27 L848.37 619.83 L848.42 623.39 L848.48 626.95 L848.52 630.51 L848.57 634.07 L848.62 637.62 L848.67 641.18 L848.72 644.74 L848.76 648.30 L848.81 651.86 L848.85 655.42 L848.90 658.98 L848.94 662.53 L848.99 666.09 L849.03 669.65 L849.08 673.21 L849.12 676.77 L849.17 680.33 L849.21 683.88 L849.26 687.44 L849.30 691.00 L849.30 702.00Z M854.70 702.00 L854.70 691.00 L854.74 688.15 L854.78 685.31 L854.82 682.46 L854.86 679.62 L854.90 676.77 L854.94 673.92 L854.98 671.08 L855.03 668.23 L855.07 665.39 L855.11 662.54 L855.15 659.70 L855.19 656.85 L855.24 654.00 L855.28 651.16 L855.32 648.31 L855.37 645.47 L855.41 642.62 L855.46 639.78 L855.50 636.93 L855.55 634.08 L855.60 631.24 L855.65 628.39 L855.71 625.55 L855.80 622.70 L855.92 625.55 L856.00 628.39 L856.07 631.24 L856.14 634.08 L856.21 636.93 L856.27 639.78 L856.33 642.62 L856.39 645.47 L856.45 648.31 L856.51 651.16 L856.57 654.00 L856.63 656.85 L856.69 659.70 L856.74 662.54 L856.80 665.39 L856.86 668.23 L856.91 671.08 L856.97 673.92 L857.02 676.77 L857.08 679.62 L857.14 682.46 L857.19 685.31 L857.25 688.15 L857.30 691.00 L857.30 702.00Z M862.70 702.00 L862.70 691.00 L862.73 688.12 L862.77 685.25 L862.80 682.38 L862.83 679.50 L862.87 676.62 L862.90 673.75 L862.93 670.88 L862.97 668.00 L863.00 665.12 L863.03 662.25 L863.07 659.38 L863.10 656.50 L863.14 653.62 L863.17 650.75 L863.21 647.88 L863.25 645.00 L863.28 642.12 L863.32 639.25 L863.36 636.38 L863.40 633.50 L863.44 630.62 L863.48 627.75 L863.53 624.88 L863.60 622.00 L864.06 621.81 L864.52 621.28 L864.99 620.49 L865.45 619.55 L865.91 618.61 L866.38 617.82 L866.84 617.29 L867.30 617.10 L867.38 620.18 L867.43 623.26 L867.48 626.34 L867.53 629.42 L867.57 632.50 L867.61 635.58 L867.65 638.65 L867.69 641.73 L867.73 644.81 L867.77 647.89 L867.81 650.97 L867.85 654.05 L867.89 657.13 L867.93 660.21 L867.97 663.29 L868.00 666.37 L868.04 669.45 L868.08 672.52 L868.12 675.60 L868.15 678.68 L868.19 681.76 L868.23 684.84 L868.26 687.92 L868.30 691.00 L868.30 702.00Z M874.20 702.00 L874.20 691.00 L874.26 687.65 L874.32 684.29 L874.38 680.94 L874.43 677.58 L874.49 674.23 L874.55 670.88 L874.61 667.52 L874.67 664.17 L874.73 660.81 L874.79 657.46 L874.86 654.10 L874.92 650.75 L874.98 647.40 L875.04 644.04 L875.11 640.69 L875.17 637.33 L875.23 633.98 L875.30 630.62 L875.37 627.27 L875.44 623.92 L875.51 620.56 L875.58 617.21 L875.67 613.85 L875.80 610.50 L876.20 610.71 L876.60 611.31 L877.00 612.20 L877.40 613.25 L877.80 614.30 L878.20 615.19 L878.60 615.79 L879.00 616.00 L879.29 616.13 L879.58 616.52 L879.86 617.17 L880.14 618.08 L880.42 619.26 L880.69 620.69 L880.96 622.38 L881.22 624.33 L881.47 626.55 L881.72 629.02 L881.95 631.76 L882.17 634.75 L882.37 638.01 L882.56 641.52 L882.74 645.30 L882.89 649.33 L883.03 653.63 L883.14 658.19 L883.22 663.01 L883.28 668.08 L883.30 673.42 L883.30 679.02 L883.30 684.88 L883.30 691.00 L883.30 702.00Z" fill="url(#gb)" stroke="#2e88c6" stroke-width="1.25"/></g>
<g clip-path="url(#cg)"><path d="M1017.50 702.00 L1017.50 691.00 L1017.52 690.54 L1017.54 690.08 L1017.55 689.61 L1017.57 689.15 L1017.59 688.69 L1017.61 688.23 L1017.63 687.76 L1017.65 687.30 L1017.67 686.84 L1017.69 686.38 L1017.70 685.91 L1017.72 685.45 L1017.74 684.99 L1017.76 684.52 L1017.78 684.06 L1017.80 683.60 L1017.82 683.14 L1017.84 682.67 L1017.86 682.21 L1017.89 681.75 L1017.91 681.29 L1017.93 680.82 L1017.96 680.36 L1018.00 679.90 L1018.04 680.36 L1018.07 680.82 L1018.09 681.29 L1018.11 681.75 L1018.14 682.21 L1018.16 682.67 L1018.18 683.14 L1018.20 683.60 L1018.22 684.06 L1018.24 684.52 L1018.26 684.99 L1018.28 685.45 L1018.30 685.91 L1018.31 686.38 L1018.33 686.84 L1018.35 687.30 L1018.37 687.76 L1018.39 688.23 L1018.41 688.69 L1018.43 689.15 L1018.45 689.61 L1018.46 690.08 L1018.48 690.54 L1018.50 691.00 L1018.50 702.00Z M1025.50 702.00 L1025.50 691.00 L1025.50 688.48 L1025.50 686.06 L1025.50 683.76 L1025.50 681.56 L1025.50 679.47 L1025.50 677.48 L1025.50 675.60 L1025.54 673.83 L1025.63 672.17 L1025.75 670.61 L1025.91 669.17 L1026.09 667.83 L1026.30 666.59 L1026.54 665.46 L1026.79 664.45 L1027.06 663.53 L1027.35 662.73 L1027.65 662.03 L1027.96 661.44 L1028.28 660.96 L1028.60 660.58 L1028.93 660.31 L1029.26 660.15 L1029.60 660.10 L1030.25 660.15 L1030.89 660.31 L1031.53 660.58 L1032.15 660.96 L1032.77 661.44 L1033.36 662.03 L1033.94 662.73 L1034.49 663.53 L1035.01 664.45 L1035.50 665.46 L1035.95 666.59 L1036.36 667.83 L1036.72 669.17 L1037.02 670.61 L1037.26 672.17 L1037.42 673.83 L1037.50 675.60 L1037.50 677.48 L1037.50 679.47 L1037.50 681.56 L1037.50 683.76 L1037.50 686.06 L1037.50 688.48 L1037.50 691.00 L1037.50 702.00Z M1063.50 702.00 L1063.50 691.00 L1063.52 690.54 L1063.54 690.08 L1063.57 689.61 L1063.59 689.15 L1063.61 688.69 L1063.63 688.23 L1063.66 687.76 L1063.68 687.30 L1063.70 686.84 L1063.72 686.38 L1063.75 685.91 L1063.77 685.45 L1063.79 684.99 L1063.82 684.52 L1063.84 684.06 L1063.86 683.60 L1063.89 683.14 L1063.91 682.67 L1063.94 682.21 L1063.96 681.75 L1063.99 681.29 L1064.02 680.82 L1064.05 680.36 L1064.10 679.90 L1064.13 680.36 L1064.15 680.82 L1064.17 681.29 L1064.19 681.75 L1064.21 682.21 L1064.22 682.67 L1064.24 683.14 L1064.26 683.60 L1064.27 684.06 L1064.29 684.52 L1064.31 684.99 L1064.32 685.45 L1064.34 685.91 L1064.35 686.38 L1064.37 686.84 L1064.38 687.30 L1064.40 687.76 L1064.41 688.23 L1064.43 688.69 L1064.44 689.15 L1064.46 689.61 L1064.47 690.08 L1064.49 690.54 L1064.50 691.00 L1064.50 702.00Z M1078.90 702.00 L1078.90 691.00 L1078.93 689.87 L1078.97 688.74 L1079.00 687.61 L1079.03 686.48 L1079.07 685.35 L1079.10 684.23 L1079.13 683.10 L1079.17 681.97 L1079.20 680.84 L1079.23 679.71 L1079.27 678.58 L1079.30 677.45 L1079.34 676.32 L1079.37 675.19 L1079.41 674.06 L1079.45 672.93 L1079.48 671.80 L1079.52 670.67 L1079.56 669.55 L1079.60 668.42 L1079.64 667.29 L1079.68 666.16 L1079.73 665.03 L1079.80 663.90 L1080.10 663.95 L1080.40 664.09 L1080.70 664.32 L1080.99 664.65 L1081.29 665.08 L1081.58 665.59 L1081.86 666.21 L1082.14 666.91 L1082.41 667.71 L1082.67 668.60 L1082.92 669.59 L1083.17 670.67 L1083.40 671.85 L1083.62 673.12 L1083.83 674.49 L1084.02 675.94 L1084.19 677.50 L1084.35 679.14 L1084.49 680.88 L1084.61 682.72 L1084.70 684.65 L1084.76 686.67 L1084.80 688.79 L1084.80 691.00 L1084.80 702.00Z" fill="url(#gg)" stroke="#1d6a35" stroke-width="1.4"/></g>
</svg>
</body></html>
